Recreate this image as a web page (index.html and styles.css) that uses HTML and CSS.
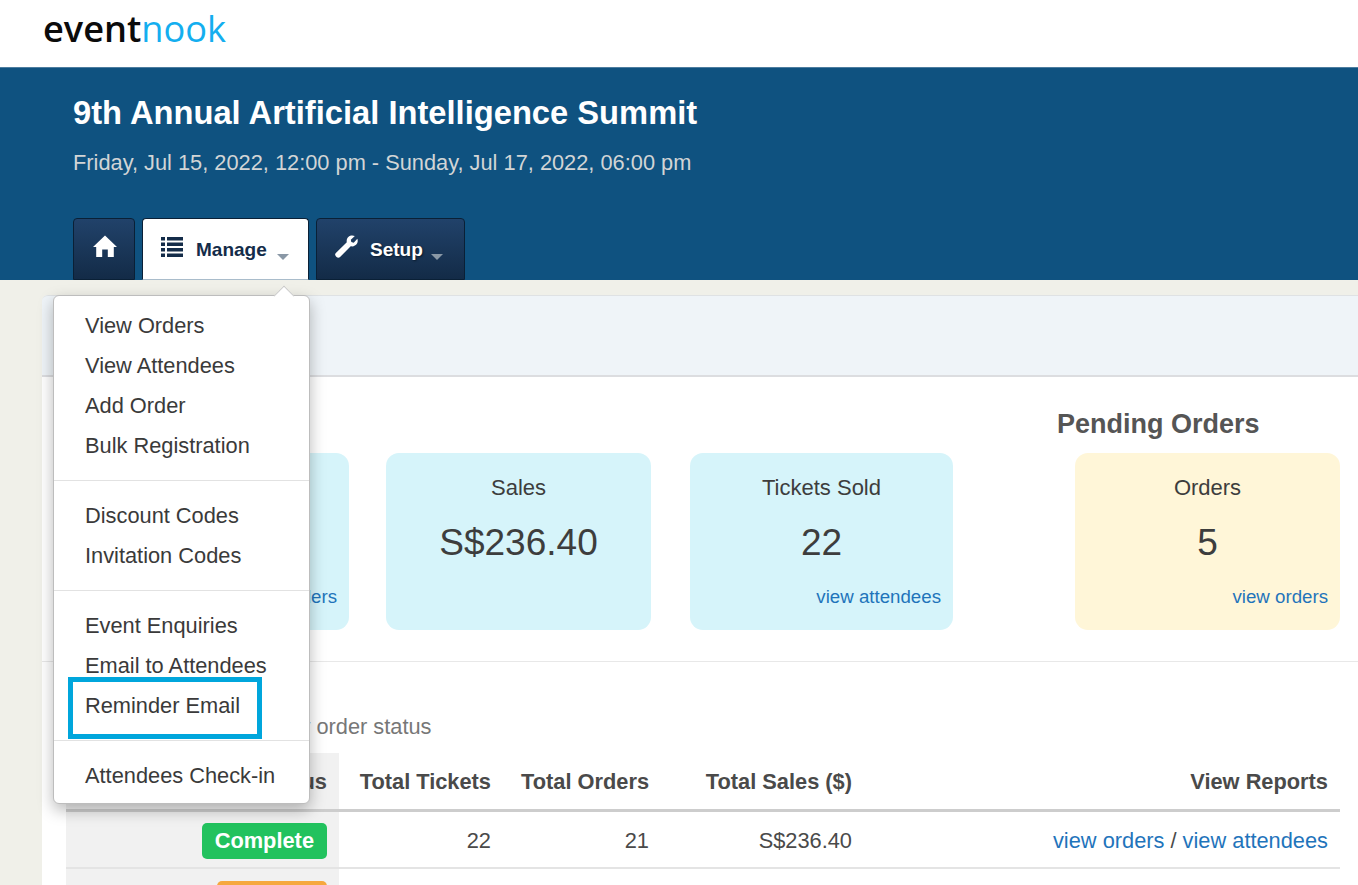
FILE: index.html
```html
<!DOCTYPE html>
<html lang="en">
<head>
<meta charset="utf-8">
<title>eventnook - Manage</title>
<link rel="stylesheet" href="styles.css">
</head>
<body>
<div class="page">
  <header class="topbar">
    <div class="logo">event<span class="logo-accent">nook</span></div>
  </header>
  <section class="banner">
    <h1 class="event-title">9th Annual Artificial Intelligence Summit</h1>
    <p class="event-date">Friday, Jul 15, 2022, 12:00 pm - Sunday, Jul 17, 2022, 06:00 pm</p>
    <nav class="tabs">
      <a class="tab tab-home">
        <svg class="icon-home" viewBox="0 0 24 24"><path d="M12 1.500 24 13h-3.200v10h-6V15.500h-5.600V23h-6V13H0z"/></svg>
      </a>
      <a class="tab tab-active tab-manage">
        <svg class="icon-list" viewBox="0 0 22 20"><path d="M0 0h4v3.500H0zM6 0h16v3.500H6zM0 5.500h4V9H0zM6 5.500h16V9H6zM0 11h4v3.500H0zM6 11h16v3.500H6zM0 16.500h4V20H0zM6 16.500h16V20H6z"/></svg>
        <span class="tab-label">Manage</span>
        <span class="caret"></span>
      </a>
      <a class="tab tab-setup">
        <svg class="icon-wrench" viewBox="0 0 24 24"><path d="M16.600 0.600 C18 0.300 19.500 0.500 20.700 1.100 L16.500 5 17 7.400 19.500 8 23.300 4 C23.900 5.500 23.900 7.300 23 8.900 21.600 11.300 18.900 12.300 16.400 11.700 L5.300 23 C4.200 24 2.700 24 1.600 23 L0.900 22.200 C-0.200 21.100 -0.100 19.700 0.900 18.700 L12.300 7.500 C11.600 4.300 13.500 1.300 16.600 0.600Z"/></svg>
        <span class="tab-label">Setup</span>
        <span class="caret"></span>
      </a>
    </nav>
  </section>

  <main class="content">
    <div class="panel">
      <div class="panel-band"></div>
      <div class="panel-body">
        <div class="stats">
          <div class="stat-group">
            <h2 class="stat-title">Completed Orders</h2>
            <div class="stat-cards">
              <div class="card card-blue card-orders">
                <div class="card-label">Orders</div>
                <div class="card-value">21</div>
                <a class="card-link">view orders</a>
              </div>
              <div class="card card-blue card-sales">
                <div class="card-label">Sales</div>
                <div class="card-value">S$236.40</div>
              </div>
              <div class="card card-blue card-tickets">
                <div class="card-label">Tickets Sold</div>
                <div class="card-value">22</div>
                <a class="card-link">view attendees</a>
              </div>
            </div>
          </div>
          <div class="stat-group stat-group-pending">
            <h2 class="stat-title">Pending Orders</h2>
            <div class="stat-cards">
              <div class="card card-yellow">
                <div class="card-label">Orders</div>
                <div class="card-value">5</div>
                <a class="card-link">view orders</a>
              </div>
            </div>
          </div>
        </div>
        <hr class="section-rule">
        <h2 class="summary-title">Summary</h2>
        <p class="summary-sub">Summary by order status</p>
        <table class="summary">
          <colgroup>
            <col class="col-status"><col class="col-tickets"><col class="col-orders"><col class="col-sales"><col>
          </colgroup>
          <thead>
            <tr>
              <th class="status-cell">Status</th>
              <th>Total Tickets</th>
              <th>Total Orders</th>
              <th>Total Sales ($)</th>
              <th>View Reports</th>
            </tr>
          </thead>
          <tbody>
            <tr>
              <td class="status-cell"><span class="badge badge-green">Complete</span></td>
              <td>22</td>
              <td>21</td>
              <td>S$236.40</td>
              <td><a class="table-link">view orders</a> / <a class="table-link">view attendees</a></td>
            </tr>
            <tr>
              <td class="status-cell"><span class="badge badge-orange">Pending</span></td>
              <td>5</td>
              <td>5</td>
              <td>S$0.00</td>
              <td><a class="table-link">view orders</a></td>
            </tr>
          </tbody>
        </table>
      </div>
    </div>
  </main>

  <div class="menu">
    <span class="menu-arrow"></span>
    <ul class="menu-list">
      <li>View Orders</li>
      <li>View Attendees</li>
      <li>Add Order</li>
      <li>Bulk Registration</li>
    </ul>
    <ul class="menu-list">
      <li>Discount Codes</li>
      <li>Invitation Codes</li>
    </ul>
    <ul class="menu-list">
      <li>Event Enquiries</li>
      <li>Email to Attendees</li>
      <li>Reminder Email</li>
    </ul>
    <ul class="menu-list">
      <li>Attendees Check-in</li>
    </ul>
    <span class="highlight"></span>
  </div>
</div>
</body>
</html>
```

FILE: styles.css
```css
* { box-sizing: border-box; }
html, body { margin: 0; padding: 0; height: 885px; overflow: hidden; }
body { font-family: "Liberation Sans", Arial, sans-serif; color: #3a3a3a; background: #f0f0e9; }
a { text-decoration: none; }

.page { position: relative; width: 1358px; height: 885px; overflow: hidden; }

.topbar { height: 67px; background: #fff; padding-left: 43px; }
.logo { font-family: "Open Sans", sans-serif; font-size: 36.200px; line-height: 57px; font-weight: 600; color: #0b0b0b; }
.logo-accent { color: #14aeef; font-weight: 400; }

.banner { height: 213px; background: #0f5280; padding-left: 73px; display: flex; flex-direction: column; border-top: 1px solid #4d7d9f; }
.event-title { margin: 26px 0 0; font-size: 32.700px; line-height: 38px; font-weight: 700; color: #fff; }
.event-date { margin: 18px 0 0; font-size: 21.800px; line-height: 26px; color: #d2d5d6; }

.tabs { margin-top: auto; display: flex; gap: 7px; height: 62px; }
.tab { display: flex; align-items: center; height: 62px; border: 1px solid #0a2036; border-radius: 4px 4px 0 0; background: linear-gradient(#21426a, #132b47); color: #fff; font-weight: 700; font-size: 19px; text-shadow: 1px 1px 2px #0a1a2c; }
.tab-home { width: 62px; justify-content: center; padding-left: 2px; }
.tab-manage { width: 167px; padding-left: 18px; }
.tab-setup { width: 149px; padding-left: 18px; }
.tab-active { background: #fff; color: #142c49; text-shadow: none; border-color: #0a2036; border-bottom-color: #a9bccb; }
.icon-home { width: 24px; height: 24px; fill: #fff; margin-top: -6px; }
.icon-list { width: 22px; height: 20px; fill: #142c49; margin-top: -4px; }
.icon-wrench { width: 23px; height: 23px; fill: #fff; margin-top: -6px; }
.tab-label { margin-left: 13px; margin-top: 2px; }
.tab-setup .tab-label { margin-left: 12px; }
.caret { width: 0; height: 0; margin-left: 10px; margin-top: 16px; border-left: 6px solid transparent; border-right: 6px solid transparent; border-top: 6px solid #8a98a6; }
.tab-setup .caret { margin-left: 8px; }

.content { padding: 15px 0 0 42px; }
.panel { width: 1340px; background: #fff; border-radius: 6px 0 0 0; }
.panel-band { height: 82px; background: #eff4f8; border-top: 1px solid #dfe2e4; border-bottom: 2px solid #dcdde0; border-radius: 6px 0 0 0; }
.panel-body { padding: 0 0 0 24px; }

.stats { display: flex; height: 284px; }
.stat-group { display: flex; flex-direction: column; }
.stat-group-pending { margin-left: 104px; }
.stat-title { margin: 29px 0 0; font-size: 27px; line-height: 36px; font-weight: 700; color: #555; height: 36px; }
.stat-cards { margin-top: 11px; display: flex; }
.stat-group-pending .stat-cards { margin-left: 18px; }
.card { width: 265px; height: 177px; border-radius: 13px; text-align: center; padding-top: 22px; font-size: 22px; display: flex; flex-direction: column; }
.card-blue { background: #d6f4fa; }
.card-yellow { background: #fff6d8; }
.card-orders { margin-left: 18px; margin-right: 37px; }
.card-sales { margin-right: 39px; }
.card-tickets { width: 263px; }
.card-label { line-height: 26px; color: #3d3d3d; }
.card-value { margin-top: 20px; font-size: 37px; line-height: 44px; color: #3d3d3d; }
.card-link { margin-top: 20px; padding-right: 12px; text-align: right; color: #1f74bb; font-size: 18.700px; line-height: 24px; }

.section-rule { margin: 0 18px 0 -24px; border: 0; border-top: 1px solid #e8e8e8; width: 1316px; }
.summary-title { margin: 0; height: 52px; font-size: 27px; line-height: 36px; color: #4f4f4f; visibility: hidden; }
.summary-sub { margin: 0; font-size: 21.800px; line-height: 26px; height: 39px; color: #777; padding-left: 122px; }

.summary { border-collapse: collapse; width: 1274px; table-layout: fixed; font-size: 21.800px; color: #4a4a4a; }
.col-status { width: 273px; }
.col-tickets { width: 164px; }
.col-orders { width: 158px; }
.col-sales { width: 203px; }
.summary th { height: 57px; padding: 3px 12px 0; text-align: right; font-weight: 700; color: #4a4a4a; border-bottom: 3px solid #cdcdcd; }
.summary td { height: 58px; padding: 4px 12px 0; text-align: right; border-bottom: 2px solid #e4e4e4; }
.summary .status-cell { background: #f1f1f1; }
.badge { display: inline-block; height: 36px; line-height: 35px; padding: 0 13px; border-radius: 5px; color: #fff; font-weight: 700; vertical-align: middle; }
.badge-green { background: #22c25e; }
.badge-orange { background: #f6a83e; padding: 0 12px; }
.table-link { color: #1f74bb; }

.menu { position: absolute; left: 53px; top: 295px; width: 257px; height: 509px; background: #fff; border: 1px solid #bdbdbd; border-radius: 6px; box-shadow: 0 6px 16px rgba(0, 0, 0, .28); padding-top: 10px; }
.menu-arrow { position: absolute; top: -10px; left: 220px; width: 20px; height: 20px; transform: rotate(45deg) scale(.72); background: #fff; border-left: 1px solid #bdbdbd; border-top: 1px solid #bdbdbd; }
.menu-list { list-style: none; margin: 0; padding: 0 0 14px; border-bottom: 1px solid #e2e2e2; }
.menu-list + .menu-list { padding-top: 15px; }
.menu-list:last-of-type { border-bottom: 0; padding-bottom: 0; }
.menu-list li { height: 40px; line-height: 40px; padding-left: 31px; font-size: 21.800px; color: #3a3a3a; white-space: nowrap; }
.highlight { position: absolute; left: 14px; top: 381px; width: 194px; height: 62px; border: 5px solid #00a6dc; }
```
